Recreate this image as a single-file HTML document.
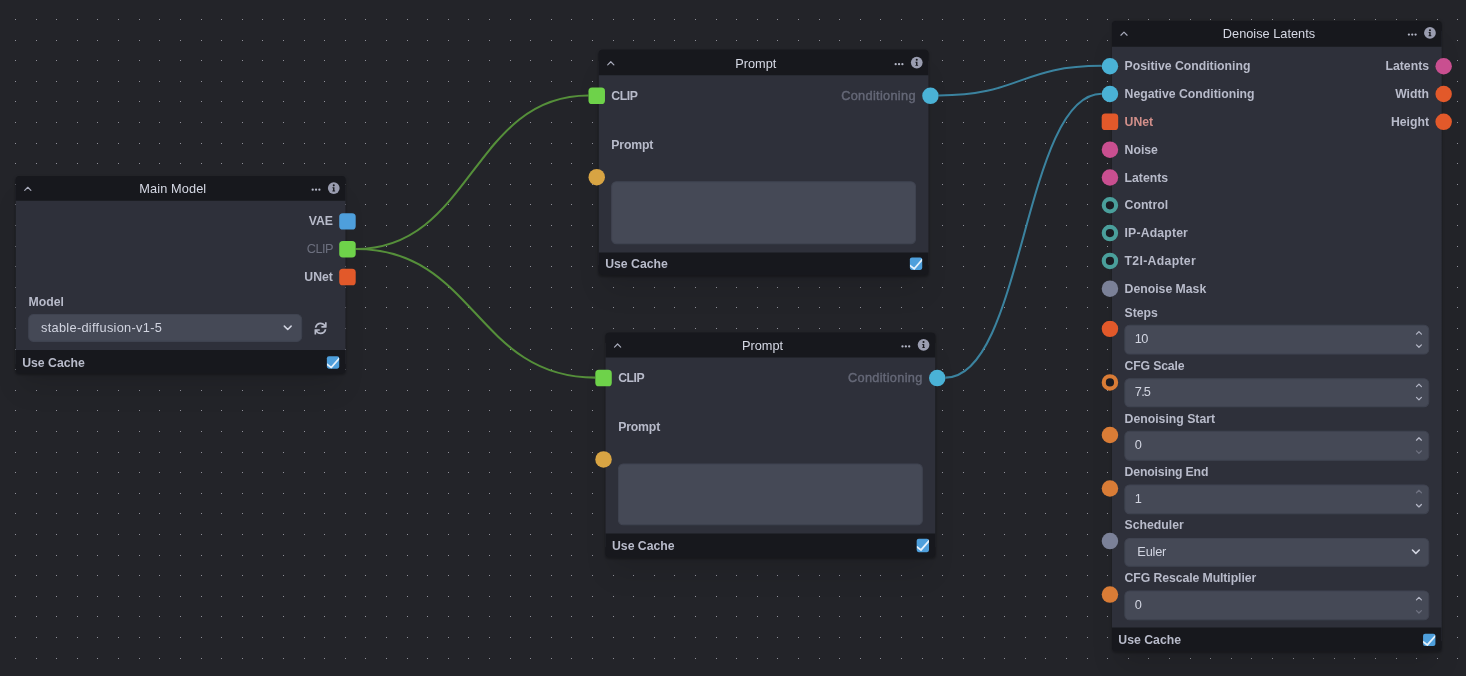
<!DOCTYPE html>
<html lang="en"><head><meta charset="utf-8"><title>Workflow Editor</title>
<style>
html,body{margin:0;padding:0}
body{width:1466px;height:676px;overflow:hidden;background:#232429;position:relative;font-family:"Liberation Sans",sans-serif}
.bg{position:absolute;left:0;top:0}
#L{position:absolute;left:0;top:0;width:1466px;height:676px;will-change:transform}
.n{position:absolute;left:0;top:0;width:320px;background:linear-gradient(to bottom,#17181d 0,#17181d 10px,#2e303a 10px,#2e303a calc(100% - 10px),#17181d calc(100% - 10px),#17181d 100%);transform-origin:0 0;border-radius:4px;box-shadow:0 20px 25px -5px rgba(0,0,0,.1),0 10px 10px -5px rgba(0,0,0,.04),0 1px 3px rgba(0,0,0,.2),0 1px 2px rgba(0,0,0,.12)}
.hd{position:absolute;left:0;top:0;width:320px;height:24px;background:#17181d;border-radius:4px 4px 0 0}
.bd{position:absolute;left:0;top:24px;width:320px;background:#2e303a}
.ft{position:absolute;left:0;width:320px;height:23.3px;background:#17181d;border-radius:0 0 4px 4px}
.t{position:absolute;white-space:nowrap;line-height:14px}
.ttl{text-align:center;font-size:12.4px;font-weight:400;color:#d6d9e5}
.i{position:absolute;display:block;overflow:visible}
.h{position:absolute;width:16px;height:16px;box-sizing:border-box}
.f{position:absolute;background:#454956;border-radius:5px;box-sizing:border-box;border:1px solid #3f4350}
.cb{position:absolute;right:5.6px;width:12.4px;height:12.2px;overflow:hidden;background:#4e9fdc;border-radius:2px}
.cb svg{display:block}
</style></head>
<body>
<div id="L">
<svg class="bg" width="1466" height="676" viewBox="0 0 1466 676" shape-rendering="crispEdges"><path fill="#8f8f98" d="M15 19h1v1h-1zm21 0h1v1h-1zm20 0h1v1h-1zm21 0h1v1h-1zm20 0h1v1h-1zm21 0h1v1h-1zm21 0h1v1h-1zm20 0h1v1h-1zm21 0h1v1h-1zm21 0h1v1h-1zm20 0h1v1h-1zm21 0h1v1h-1zm20 0h1v1h-1zm21 0h1v1h-1zm21 0h1v1h-1zm20 0h1v1h-1zm21 0h1v1h-1zm20 0h1v1h-1zm21 0h1v1h-1zm21 0h1v1h-1zm20 0h1v1h-1zm21 0h1v1h-1zm20 0h1v1h-1zm21 0h1v1h-1zm21 0h1v1h-1zm20 0h1v1h-1zm21 0h1v1h-1zm20 0h1v1h-1zm21 0h1v1h-1zm21 0h1v1h-1zm20 0h1v1h-1zm21 0h1v1h-1zm20 0h1v1h-1zm21 0h1v1h-1zm21 0h1v1h-1zm20 0h1v1h-1zm21 0h1v1h-1zm20 0h1v1h-1zm21 0h1v1h-1zm21 0h1v1h-1zm20 0h1v1h-1zm21 0h1v1h-1zm20 0h1v1h-1zm21 0h1v1h-1zm21 0h1v1h-1zm20 0h1v1h-1zm21 0h1v1h-1zm21 0h1v1h-1zm20 0h1v1h-1zm21 0h1v1h-1zm20 0h1v1h-1zm21 0h1v1h-1zm21 0h1v1h-1zm20 0h1v1h-1zm21 0h1v1h-1zm20 0h1v1h-1zm21 0h1v1h-1zm21 0h1v1h-1zm20 0h1v1h-1zm21 0h1v1h-1zm20 0h1v1h-1zm21 0h1v1h-1zm21 0h1v1h-1zm20 0h1v1h-1zm21 0h1v1h-1zm20 0h1v1h-1zm21 0h1v1h-1zm21 0h1v1h-1zm20 0h1v1h-1zm21 0h1v1h-1zm20 0h1v1h-1zM15 40h1v1h-1zm21 0h1v1h-1zm20 0h1v1h-1zm21 0h1v1h-1zm20 0h1v1h-1zm21 0h1v1h-1zm21 0h1v1h-1zm20 0h1v1h-1zm21 0h1v1h-1zm21 0h1v1h-1zm20 0h1v1h-1zm21 0h1v1h-1zm20 0h1v1h-1zm21 0h1v1h-1zm21 0h1v1h-1zm20 0h1v1h-1zm21 0h1v1h-1zm20 0h1v1h-1zm21 0h1v1h-1zm21 0h1v1h-1zm20 0h1v1h-1zm21 0h1v1h-1zm20 0h1v1h-1zm21 0h1v1h-1zm21 0h1v1h-1zm20 0h1v1h-1zm21 0h1v1h-1zm20 0h1v1h-1zm21 0h1v1h-1zm21 0h1v1h-1zm20 0h1v1h-1zm21 0h1v1h-1zm20 0h1v1h-1zm21 0h1v1h-1zm21 0h1v1h-1zm20 0h1v1h-1zm21 0h1v1h-1zm20 0h1v1h-1zm21 0h1v1h-1zm21 0h1v1h-1zm20 0h1v1h-1zm21 0h1v1h-1zm20 0h1v1h-1zm21 0h1v1h-1zm21 0h1v1h-1zm20 0h1v1h-1zm21 0h1v1h-1zm21 0h1v1h-1zm20 0h1v1h-1zm21 0h1v1h-1zm20 0h1v1h-1zm21 0h1v1h-1zm21 0h1v1h-1zm20 0h1v1h-1zm21 0h1v1h-1zm20 0h1v1h-1zm21 0h1v1h-1zm21 0h1v1h-1zm20 0h1v1h-1zm21 0h1v1h-1zm20 0h1v1h-1zm21 0h1v1h-1zm21 0h1v1h-1zm20 0h1v1h-1zm21 0h1v1h-1zm20 0h1v1h-1zm21 0h1v1h-1zm21 0h1v1h-1zm20 0h1v1h-1zm21 0h1v1h-1zm20 0h1v1h-1zM15 60h1v1h-1zm21 0h1v1h-1zm20 0h1v1h-1zm21 0h1v1h-1zm20 0h1v1h-1zm21 0h1v1h-1zm21 0h1v1h-1zm20 0h1v1h-1zm21 0h1v1h-1zm21 0h1v1h-1zm20 0h1v1h-1zm21 0h1v1h-1zm20 0h1v1h-1zm21 0h1v1h-1zm21 0h1v1h-1zm20 0h1v1h-1zm21 0h1v1h-1zm20 0h1v1h-1zm21 0h1v1h-1zm21 0h1v1h-1zm20 0h1v1h-1zm21 0h1v1h-1zm20 0h1v1h-1zm21 0h1v1h-1zm21 0h1v1h-1zm20 0h1v1h-1zm21 0h1v1h-1zm20 0h1v1h-1zm21 0h1v1h-1zm21 0h1v1h-1zm20 0h1v1h-1zm21 0h1v1h-1zm20 0h1v1h-1zm21 0h1v1h-1zm21 0h1v1h-1zm20 0h1v1h-1zm21 0h1v1h-1zm20 0h1v1h-1zm21 0h1v1h-1zm21 0h1v1h-1zm20 0h1v1h-1zm21 0h1v1h-1zm20 0h1v1h-1zm21 0h1v1h-1zm21 0h1v1h-1zm20 0h1v1h-1zm21 0h1v1h-1zm21 0h1v1h-1zm20 0h1v1h-1zm21 0h1v1h-1zm20 0h1v1h-1zm21 0h1v1h-1zm21 0h1v1h-1zm20 0h1v1h-1zm21 0h1v1h-1zm20 0h1v1h-1zm21 0h1v1h-1zm21 0h1v1h-1zm20 0h1v1h-1zm21 0h1v1h-1zm20 0h1v1h-1zm21 0h1v1h-1zm21 0h1v1h-1zm20 0h1v1h-1zm21 0h1v1h-1zm20 0h1v1h-1zm21 0h1v1h-1zm21 0h1v1h-1zm20 0h1v1h-1zm21 0h1v1h-1zm20 0h1v1h-1zM15 81h1v1h-1zm21 0h1v1h-1zm20 0h1v1h-1zm21 0h1v1h-1zm20 0h1v1h-1zm21 0h1v1h-1zm21 0h1v1h-1zm20 0h1v1h-1zm21 0h1v1h-1zm21 0h1v1h-1zm20 0h1v1h-1zm21 0h1v1h-1zm20 0h1v1h-1zm21 0h1v1h-1zm21 0h1v1h-1zm20 0h1v1h-1zm21 0h1v1h-1zm20 0h1v1h-1zm21 0h1v1h-1zm21 0h1v1h-1zm20 0h1v1h-1zm21 0h1v1h-1zm20 0h1v1h-1zm21 0h1v1h-1zm21 0h1v1h-1zm20 0h1v1h-1zm21 0h1v1h-1zm20 0h1v1h-1zm21 0h1v1h-1zm21 0h1v1h-1zm20 0h1v1h-1zm21 0h1v1h-1zm20 0h1v1h-1zm21 0h1v1h-1zm21 0h1v1h-1zm20 0h1v1h-1zm21 0h1v1h-1zm20 0h1v1h-1zm21 0h1v1h-1zm21 0h1v1h-1zm20 0h1v1h-1zm21 0h1v1h-1zm20 0h1v1h-1zm21 0h1v1h-1zm21 0h1v1h-1zm20 0h1v1h-1zm21 0h1v1h-1zm21 0h1v1h-1zm20 0h1v1h-1zm21 0h1v1h-1zm20 0h1v1h-1zm21 0h1v1h-1zm21 0h1v1h-1zm20 0h1v1h-1zm21 0h1v1h-1zm20 0h1v1h-1zm21 0h1v1h-1zm21 0h1v1h-1zm20 0h1v1h-1zm21 0h1v1h-1zm20 0h1v1h-1zm21 0h1v1h-1zm21 0h1v1h-1zm20 0h1v1h-1zm21 0h1v1h-1zm20 0h1v1h-1zm21 0h1v1h-1zm21 0h1v1h-1zm20 0h1v1h-1zm21 0h1v1h-1zm20 0h1v1h-1zM15 101h1v1h-1zm21 0h1v1h-1zm20 0h1v1h-1zm21 0h1v1h-1zm20 0h1v1h-1zm21 0h1v1h-1zm21 0h1v1h-1zm20 0h1v1h-1zm21 0h1v1h-1zm21 0h1v1h-1zm20 0h1v1h-1zm21 0h1v1h-1zm20 0h1v1h-1zm21 0h1v1h-1zm21 0h1v1h-1zm20 0h1v1h-1zm21 0h1v1h-1zm20 0h1v1h-1zm21 0h1v1h-1zm21 0h1v1h-1zm20 0h1v1h-1zm21 0h1v1h-1zm20 0h1v1h-1zm21 0h1v1h-1zm21 0h1v1h-1zm20 0h1v1h-1zm21 0h1v1h-1zm20 0h1v1h-1zm21 0h1v1h-1zm21 0h1v1h-1zm20 0h1v1h-1zm21 0h1v1h-1zm20 0h1v1h-1zm21 0h1v1h-1zm21 0h1v1h-1zm20 0h1v1h-1zm21 0h1v1h-1zm20 0h1v1h-1zm21 0h1v1h-1zm21 0h1v1h-1zm20 0h1v1h-1zm21 0h1v1h-1zm20 0h1v1h-1zm21 0h1v1h-1zm21 0h1v1h-1zm20 0h1v1h-1zm21 0h1v1h-1zm21 0h1v1h-1zm20 0h1v1h-1zm21 0h1v1h-1zm20 0h1v1h-1zm21 0h1v1h-1zm21 0h1v1h-1zm20 0h1v1h-1zm21 0h1v1h-1zm20 0h1v1h-1zm21 0h1v1h-1zm21 0h1v1h-1zm20 0h1v1h-1zm21 0h1v1h-1zm20 0h1v1h-1zm21 0h1v1h-1zm21 0h1v1h-1zm20 0h1v1h-1zm21 0h1v1h-1zm20 0h1v1h-1zm21 0h1v1h-1zm21 0h1v1h-1zm20 0h1v1h-1zm21 0h1v1h-1zm20 0h1v1h-1zM15 122h1v1h-1zm21 0h1v1h-1zm20 0h1v1h-1zm21 0h1v1h-1zm20 0h1v1h-1zm21 0h1v1h-1zm21 0h1v1h-1zm20 0h1v1h-1zm21 0h1v1h-1zm21 0h1v1h-1zm20 0h1v1h-1zm21 0h1v1h-1zm20 0h1v1h-1zm21 0h1v1h-1zm21 0h1v1h-1zm20 0h1v1h-1zm21 0h1v1h-1zm20 0h1v1h-1zm21 0h1v1h-1zm21 0h1v1h-1zm20 0h1v1h-1zm21 0h1v1h-1zm20 0h1v1h-1zm21 0h1v1h-1zm21 0h1v1h-1zm20 0h1v1h-1zm21 0h1v1h-1zm20 0h1v1h-1zm21 0h1v1h-1zm21 0h1v1h-1zm20 0h1v1h-1zm21 0h1v1h-1zm20 0h1v1h-1zm21 0h1v1h-1zm21 0h1v1h-1zm20 0h1v1h-1zm21 0h1v1h-1zm20 0h1v1h-1zm21 0h1v1h-1zm21 0h1v1h-1zm20 0h1v1h-1zm21 0h1v1h-1zm20 0h1v1h-1zm21 0h1v1h-1zm21 0h1v1h-1zm20 0h1v1h-1zm21 0h1v1h-1zm21 0h1v1h-1zm20 0h1v1h-1zm21 0h1v1h-1zm20 0h1v1h-1zm21 0h1v1h-1zm21 0h1v1h-1zm20 0h1v1h-1zm21 0h1v1h-1zm20 0h1v1h-1zm21 0h1v1h-1zm21 0h1v1h-1zm20 0h1v1h-1zm21 0h1v1h-1zm20 0h1v1h-1zm21 0h1v1h-1zm21 0h1v1h-1zm20 0h1v1h-1zm21 0h1v1h-1zm20 0h1v1h-1zm21 0h1v1h-1zm21 0h1v1h-1zm20 0h1v1h-1zm21 0h1v1h-1zm20 0h1v1h-1zM15 143h1v1h-1zm21 0h1v1h-1zm20 0h1v1h-1zm21 0h1v1h-1zm20 0h1v1h-1zm21 0h1v1h-1zm21 0h1v1h-1zm20 0h1v1h-1zm21 0h1v1h-1zm21 0h1v1h-1zm20 0h1v1h-1zm21 0h1v1h-1zm20 0h1v1h-1zm21 0h1v1h-1zm21 0h1v1h-1zm20 0h1v1h-1zm21 0h1v1h-1zm20 0h1v1h-1zm21 0h1v1h-1zm21 0h1v1h-1zm20 0h1v1h-1zm21 0h1v1h-1zm20 0h1v1h-1zm21 0h1v1h-1zm21 0h1v1h-1zm20 0h1v1h-1zm21 0h1v1h-1zm20 0h1v1h-1zm21 0h1v1h-1zm21 0h1v1h-1zm20 0h1v1h-1zm21 0h1v1h-1zm20 0h1v1h-1zm21 0h1v1h-1zm21 0h1v1h-1zm20 0h1v1h-1zm21 0h1v1h-1zm20 0h1v1h-1zm21 0h1v1h-1zm21 0h1v1h-1zm20 0h1v1h-1zm21 0h1v1h-1zm20 0h1v1h-1zm21 0h1v1h-1zm21 0h1v1h-1zm20 0h1v1h-1zm21 0h1v1h-1zm21 0h1v1h-1zm20 0h1v1h-1zm21 0h1v1h-1zm20 0h1v1h-1zm21 0h1v1h-1zm21 0h1v1h-1zm20 0h1v1h-1zm21 0h1v1h-1zm20 0h1v1h-1zm21 0h1v1h-1zm21 0h1v1h-1zm20 0h1v1h-1zm21 0h1v1h-1zm20 0h1v1h-1zm21 0h1v1h-1zm21 0h1v1h-1zm20 0h1v1h-1zm21 0h1v1h-1zm20 0h1v1h-1zm21 0h1v1h-1zm21 0h1v1h-1zm20 0h1v1h-1zm21 0h1v1h-1zm20 0h1v1h-1zM15 163h1v1h-1zm21 0h1v1h-1zm20 0h1v1h-1zm21 0h1v1h-1zm20 0h1v1h-1zm21 0h1v1h-1zm21 0h1v1h-1zm20 0h1v1h-1zm21 0h1v1h-1zm21 0h1v1h-1zm20 0h1v1h-1zm21 0h1v1h-1zm20 0h1v1h-1zm21 0h1v1h-1zm21 0h1v1h-1zm20 0h1v1h-1zm21 0h1v1h-1zm20 0h1v1h-1zm21 0h1v1h-1zm21 0h1v1h-1zm20 0h1v1h-1zm21 0h1v1h-1zm20 0h1v1h-1zm21 0h1v1h-1zm21 0h1v1h-1zm20 0h1v1h-1zm21 0h1v1h-1zm20 0h1v1h-1zm21 0h1v1h-1zm21 0h1v1h-1zm20 0h1v1h-1zm21 0h1v1h-1zm20 0h1v1h-1zm21 0h1v1h-1zm21 0h1v1h-1zm20 0h1v1h-1zm21 0h1v1h-1zm20 0h1v1h-1zm21 0h1v1h-1zm21 0h1v1h-1zm20 0h1v1h-1zm21 0h1v1h-1zm20 0h1v1h-1zm21 0h1v1h-1zm21 0h1v1h-1zm20 0h1v1h-1zm21 0h1v1h-1zm21 0h1v1h-1zm20 0h1v1h-1zm21 0h1v1h-1zm20 0h1v1h-1zm21 0h1v1h-1zm21 0h1v1h-1zm20 0h1v1h-1zm21 0h1v1h-1zm20 0h1v1h-1zm21 0h1v1h-1zm21 0h1v1h-1zm20 0h1v1h-1zm21 0h1v1h-1zm20 0h1v1h-1zm21 0h1v1h-1zm21 0h1v1h-1zm20 0h1v1h-1zm21 0h1v1h-1zm20 0h1v1h-1zm21 0h1v1h-1zm21 0h1v1h-1zm20 0h1v1h-1zm21 0h1v1h-1zm20 0h1v1h-1zM15 184h1v1h-1zm21 0h1v1h-1zm20 0h1v1h-1zm21 0h1v1h-1zm20 0h1v1h-1zm21 0h1v1h-1zm21 0h1v1h-1zm20 0h1v1h-1zm21 0h1v1h-1zm21 0h1v1h-1zm20 0h1v1h-1zm21 0h1v1h-1zm20 0h1v1h-1zm21 0h1v1h-1zm21 0h1v1h-1zm20 0h1v1h-1zm21 0h1v1h-1zm20 0h1v1h-1zm21 0h1v1h-1zm21 0h1v1h-1zm20 0h1v1h-1zm21 0h1v1h-1zm20 0h1v1h-1zm21 0h1v1h-1zm21 0h1v1h-1zm20 0h1v1h-1zm21 0h1v1h-1zm20 0h1v1h-1zm21 0h1v1h-1zm21 0h1v1h-1zm20 0h1v1h-1zm21 0h1v1h-1zm20 0h1v1h-1zm21 0h1v1h-1zm21 0h1v1h-1zm20 0h1v1h-1zm21 0h1v1h-1zm20 0h1v1h-1zm21 0h1v1h-1zm21 0h1v1h-1zm20 0h1v1h-1zm21 0h1v1h-1zm20 0h1v1h-1zm21 0h1v1h-1zm21 0h1v1h-1zm20 0h1v1h-1zm21 0h1v1h-1zm21 0h1v1h-1zm20 0h1v1h-1zm21 0h1v1h-1zm20 0h1v1h-1zm21 0h1v1h-1zm21 0h1v1h-1zm20 0h1v1h-1zm21 0h1v1h-1zm20 0h1v1h-1zm21 0h1v1h-1zm21 0h1v1h-1zm20 0h1v1h-1zm21 0h1v1h-1zm20 0h1v1h-1zm21 0h1v1h-1zm21 0h1v1h-1zm20 0h1v1h-1zm21 0h1v1h-1zm20 0h1v1h-1zm21 0h1v1h-1zm21 0h1v1h-1zm20 0h1v1h-1zm21 0h1v1h-1zm20 0h1v1h-1zM15 204h1v1h-1zm21 0h1v1h-1zm20 0h1v1h-1zm21 0h1v1h-1zm20 0h1v1h-1zm21 0h1v1h-1zm21 0h1v1h-1zm20 0h1v1h-1zm21 0h1v1h-1zm21 0h1v1h-1zm20 0h1v1h-1zm21 0h1v1h-1zm20 0h1v1h-1zm21 0h1v1h-1zm21 0h1v1h-1zm20 0h1v1h-1zm21 0h1v1h-1zm20 0h1v1h-1zm21 0h1v1h-1zm21 0h1v1h-1zm20 0h1v1h-1zm21 0h1v1h-1zm20 0h1v1h-1zm21 0h1v1h-1zm21 0h1v1h-1zm20 0h1v1h-1zm21 0h1v1h-1zm20 0h1v1h-1zm21 0h1v1h-1zm21 0h1v1h-1zm20 0h1v1h-1zm21 0h1v1h-1zm20 0h1v1h-1zm21 0h1v1h-1zm21 0h1v1h-1zm20 0h1v1h-1zm21 0h1v1h-1zm20 0h1v1h-1zm21 0h1v1h-1zm21 0h1v1h-1zm20 0h1v1h-1zm21 0h1v1h-1zm20 0h1v1h-1zm21 0h1v1h-1zm21 0h1v1h-1zm20 0h1v1h-1zm21 0h1v1h-1zm21 0h1v1h-1zm20 0h1v1h-1zm21 0h1v1h-1zm20 0h1v1h-1zm21 0h1v1h-1zm21 0h1v1h-1zm20 0h1v1h-1zm21 0h1v1h-1zm20 0h1v1h-1zm21 0h1v1h-1zm21 0h1v1h-1zm20 0h1v1h-1zm21 0h1v1h-1zm20 0h1v1h-1zm21 0h1v1h-1zm21 0h1v1h-1zm20 0h1v1h-1zm21 0h1v1h-1zm20 0h1v1h-1zm21 0h1v1h-1zm21 0h1v1h-1zm20 0h1v1h-1zm21 0h1v1h-1zm20 0h1v1h-1zM15 225h1v1h-1zm21 0h1v1h-1zm20 0h1v1h-1zm21 0h1v1h-1zm20 0h1v1h-1zm21 0h1v1h-1zm21 0h1v1h-1zm20 0h1v1h-1zm21 0h1v1h-1zm21 0h1v1h-1zm20 0h1v1h-1zm21 0h1v1h-1zm20 0h1v1h-1zm21 0h1v1h-1zm21 0h1v1h-1zm20 0h1v1h-1zm21 0h1v1h-1zm20 0h1v1h-1zm21 0h1v1h-1zm21 0h1v1h-1zm20 0h1v1h-1zm21 0h1v1h-1zm20 0h1v1h-1zm21 0h1v1h-1zm21 0h1v1h-1zm20 0h1v1h-1zm21 0h1v1h-1zm20 0h1v1h-1zm21 0h1v1h-1zm21 0h1v1h-1zm20 0h1v1h-1zm21 0h1v1h-1zm20 0h1v1h-1zm21 0h1v1h-1zm21 0h1v1h-1zm20 0h1v1h-1zm21 0h1v1h-1zm20 0h1v1h-1zm21 0h1v1h-1zm21 0h1v1h-1zm20 0h1v1h-1zm21 0h1v1h-1zm20 0h1v1h-1zm21 0h1v1h-1zm21 0h1v1h-1zm20 0h1v1h-1zm21 0h1v1h-1zm21 0h1v1h-1zm20 0h1v1h-1zm21 0h1v1h-1zm20 0h1v1h-1zm21 0h1v1h-1zm21 0h1v1h-1zm20 0h1v1h-1zm21 0h1v1h-1zm20 0h1v1h-1zm21 0h1v1h-1zm21 0h1v1h-1zm20 0h1v1h-1zm21 0h1v1h-1zm20 0h1v1h-1zm21 0h1v1h-1zm21 0h1v1h-1zm20 0h1v1h-1zm21 0h1v1h-1zm20 0h1v1h-1zm21 0h1v1h-1zm21 0h1v1h-1zm20 0h1v1h-1zm21 0h1v1h-1zm20 0h1v1h-1zM15 246h1v1h-1zm21 0h1v1h-1zm20 0h1v1h-1zm21 0h1v1h-1zm20 0h1v1h-1zm21 0h1v1h-1zm21 0h1v1h-1zm20 0h1v1h-1zm21 0h1v1h-1zm21 0h1v1h-1zm20 0h1v1h-1zm21 0h1v1h-1zm20 0h1v1h-1zm21 0h1v1h-1zm21 0h1v1h-1zm20 0h1v1h-1zm21 0h1v1h-1zm20 0h1v1h-1zm21 0h1v1h-1zm21 0h1v1h-1zm20 0h1v1h-1zm21 0h1v1h-1zm20 0h1v1h-1zm21 0h1v1h-1zm21 0h1v1h-1zm20 0h1v1h-1zm21 0h1v1h-1zm20 0h1v1h-1zm21 0h1v1h-1zm21 0h1v1h-1zm20 0h1v1h-1zm21 0h1v1h-1zm20 0h1v1h-1zm21 0h1v1h-1zm21 0h1v1h-1zm20 0h1v1h-1zm21 0h1v1h-1zm20 0h1v1h-1zm21 0h1v1h-1zm21 0h1v1h-1zm20 0h1v1h-1zm21 0h1v1h-1zm20 0h1v1h-1zm21 0h1v1h-1zm21 0h1v1h-1zm20 0h1v1h-1zm21 0h1v1h-1zm21 0h1v1h-1zm20 0h1v1h-1zm21 0h1v1h-1zm20 0h1v1h-1zm21 0h1v1h-1zm21 0h1v1h-1zm20 0h1v1h-1zm21 0h1v1h-1zm20 0h1v1h-1zm21 0h1v1h-1zm21 0h1v1h-1zm20 0h1v1h-1zm21 0h1v1h-1zm20 0h1v1h-1zm21 0h1v1h-1zm21 0h1v1h-1zm20 0h1v1h-1zm21 0h1v1h-1zm20 0h1v1h-1zm21 0h1v1h-1zm21 0h1v1h-1zm20 0h1v1h-1zm21 0h1v1h-1zm20 0h1v1h-1zM15 266h1v1h-1zm21 0h1v1h-1zm20 0h1v1h-1zm21 0h1v1h-1zm20 0h1v1h-1zm21 0h1v1h-1zm21 0h1v1h-1zm20 0h1v1h-1zm21 0h1v1h-1zm21 0h1v1h-1zm20 0h1v1h-1zm21 0h1v1h-1zm20 0h1v1h-1zm21 0h1v1h-1zm21 0h1v1h-1zm20 0h1v1h-1zm21 0h1v1h-1zm20 0h1v1h-1zm21 0h1v1h-1zm21 0h1v1h-1zm20 0h1v1h-1zm21 0h1v1h-1zm20 0h1v1h-1zm21 0h1v1h-1zm21 0h1v1h-1zm20 0h1v1h-1zm21 0h1v1h-1zm20 0h1v1h-1zm21 0h1v1h-1zm21 0h1v1h-1zm20 0h1v1h-1zm21 0h1v1h-1zm20 0h1v1h-1zm21 0h1v1h-1zm21 0h1v1h-1zm20 0h1v1h-1zm21 0h1v1h-1zm20 0h1v1h-1zm21 0h1v1h-1zm21 0h1v1h-1zm20 0h1v1h-1zm21 0h1v1h-1zm20 0h1v1h-1zm21 0h1v1h-1zm21 0h1v1h-1zm20 0h1v1h-1zm21 0h1v1h-1zm21 0h1v1h-1zm20 0h1v1h-1zm21 0h1v1h-1zm20 0h1v1h-1zm21 0h1v1h-1zm21 0h1v1h-1zm20 0h1v1h-1zm21 0h1v1h-1zm20 0h1v1h-1zm21 0h1v1h-1zm21 0h1v1h-1zm20 0h1v1h-1zm21 0h1v1h-1zm20 0h1v1h-1zm21 0h1v1h-1zm21 0h1v1h-1zm20 0h1v1h-1zm21 0h1v1h-1zm20 0h1v1h-1zm21 0h1v1h-1zm21 0h1v1h-1zm20 0h1v1h-1zm21 0h1v1h-1zm20 0h1v1h-1zM15 287h1v1h-1zm21 0h1v1h-1zm20 0h1v1h-1zm21 0h1v1h-1zm20 0h1v1h-1zm21 0h1v1h-1zm21 0h1v1h-1zm20 0h1v1h-1zm21 0h1v1h-1zm21 0h1v1h-1zm20 0h1v1h-1zm21 0h1v1h-1zm20 0h1v1h-1zm21 0h1v1h-1zm21 0h1v1h-1zm20 0h1v1h-1zm21 0h1v1h-1zm20 0h1v1h-1zm21 0h1v1h-1zm21 0h1v1h-1zm20 0h1v1h-1zm21 0h1v1h-1zm20 0h1v1h-1zm21 0h1v1h-1zm21 0h1v1h-1zm20 0h1v1h-1zm21 0h1v1h-1zm20 0h1v1h-1zm21 0h1v1h-1zm21 0h1v1h-1zm20 0h1v1h-1zm21 0h1v1h-1zm20 0h1v1h-1zm21 0h1v1h-1zm21 0h1v1h-1zm20 0h1v1h-1zm21 0h1v1h-1zm20 0h1v1h-1zm21 0h1v1h-1zm21 0h1v1h-1zm20 0h1v1h-1zm21 0h1v1h-1zm20 0h1v1h-1zm21 0h1v1h-1zm21 0h1v1h-1zm20 0h1v1h-1zm21 0h1v1h-1zm21 0h1v1h-1zm20 0h1v1h-1zm21 0h1v1h-1zm20 0h1v1h-1zm21 0h1v1h-1zm21 0h1v1h-1zm20 0h1v1h-1zm21 0h1v1h-1zm20 0h1v1h-1zm21 0h1v1h-1zm21 0h1v1h-1zm20 0h1v1h-1zm21 0h1v1h-1zm20 0h1v1h-1zm21 0h1v1h-1zm21 0h1v1h-1zm20 0h1v1h-1zm21 0h1v1h-1zm20 0h1v1h-1zm21 0h1v1h-1zm21 0h1v1h-1zm20 0h1v1h-1zm21 0h1v1h-1zm20 0h1v1h-1zM15 307h1v1h-1zm21 0h1v1h-1zm20 0h1v1h-1zm21 0h1v1h-1zm20 0h1v1h-1zm21 0h1v1h-1zm21 0h1v1h-1zm20 0h1v1h-1zm21 0h1v1h-1zm21 0h1v1h-1zm20 0h1v1h-1zm21 0h1v1h-1zm20 0h1v1h-1zm21 0h1v1h-1zm21 0h1v1h-1zm20 0h1v1h-1zm21 0h1v1h-1zm20 0h1v1h-1zm21 0h1v1h-1zm21 0h1v1h-1zm20 0h1v1h-1zm21 0h1v1h-1zm20 0h1v1h-1zm21 0h1v1h-1zm21 0h1v1h-1zm20 0h1v1h-1zm21 0h1v1h-1zm20 0h1v1h-1zm21 0h1v1h-1zm21 0h1v1h-1zm20 0h1v1h-1zm21 0h1v1h-1zm20 0h1v1h-1zm21 0h1v1h-1zm21 0h1v1h-1zm20 0h1v1h-1zm21 0h1v1h-1zm20 0h1v1h-1zm21 0h1v1h-1zm21 0h1v1h-1zm20 0h1v1h-1zm21 0h1v1h-1zm20 0h1v1h-1zm21 0h1v1h-1zm21 0h1v1h-1zm20 0h1v1h-1zm21 0h1v1h-1zm21 0h1v1h-1zm20 0h1v1h-1zm21 0h1v1h-1zm20 0h1v1h-1zm21 0h1v1h-1zm21 0h1v1h-1zm20 0h1v1h-1zm21 0h1v1h-1zm20 0h1v1h-1zm21 0h1v1h-1zm21 0h1v1h-1zm20 0h1v1h-1zm21 0h1v1h-1zm20 0h1v1h-1zm21 0h1v1h-1zm21 0h1v1h-1zm20 0h1v1h-1zm21 0h1v1h-1zm20 0h1v1h-1zm21 0h1v1h-1zm21 0h1v1h-1zm20 0h1v1h-1zm21 0h1v1h-1zm20 0h1v1h-1zM15 328h1v1h-1zm21 0h1v1h-1zm20 0h1v1h-1zm21 0h1v1h-1zm20 0h1v1h-1zm21 0h1v1h-1zm21 0h1v1h-1zm20 0h1v1h-1zm21 0h1v1h-1zm21 0h1v1h-1zm20 0h1v1h-1zm21 0h1v1h-1zm20 0h1v1h-1zm21 0h1v1h-1zm21 0h1v1h-1zm20 0h1v1h-1zm21 0h1v1h-1zm20 0h1v1h-1zm21 0h1v1h-1zm21 0h1v1h-1zm20 0h1v1h-1zm21 0h1v1h-1zm20 0h1v1h-1zm21 0h1v1h-1zm21 0h1v1h-1zm20 0h1v1h-1zm21 0h1v1h-1zm20 0h1v1h-1zm21 0h1v1h-1zm21 0h1v1h-1zm20 0h1v1h-1zm21 0h1v1h-1zm20 0h1v1h-1zm21 0h1v1h-1zm21 0h1v1h-1zm20 0h1v1h-1zm21 0h1v1h-1zm20 0h1v1h-1zm21 0h1v1h-1zm21 0h1v1h-1zm20 0h1v1h-1zm21 0h1v1h-1zm20 0h1v1h-1zm21 0h1v1h-1zm21 0h1v1h-1zm20 0h1v1h-1zm21 0h1v1h-1zm21 0h1v1h-1zm20 0h1v1h-1zm21 0h1v1h-1zm20 0h1v1h-1zm21 0h1v1h-1zm21 0h1v1h-1zm20 0h1v1h-1zm21 0h1v1h-1zm20 0h1v1h-1zm21 0h1v1h-1zm21 0h1v1h-1zm20 0h1v1h-1zm21 0h1v1h-1zm20 0h1v1h-1zm21 0h1v1h-1zm21 0h1v1h-1zm20 0h1v1h-1zm21 0h1v1h-1zm20 0h1v1h-1zm21 0h1v1h-1zm21 0h1v1h-1zm20 0h1v1h-1zm21 0h1v1h-1zm20 0h1v1h-1zM15 349h1v1h-1zm21 0h1v1h-1zm20 0h1v1h-1zm21 0h1v1h-1zm20 0h1v1h-1zm21 0h1v1h-1zm21 0h1v1h-1zm20 0h1v1h-1zm21 0h1v1h-1zm21 0h1v1h-1zm20 0h1v1h-1zm21 0h1v1h-1zm20 0h1v1h-1zm21 0h1v1h-1zm21 0h1v1h-1zm20 0h1v1h-1zm21 0h1v1h-1zm20 0h1v1h-1zm21 0h1v1h-1zm21 0h1v1h-1zm20 0h1v1h-1zm21 0h1v1h-1zm20 0h1v1h-1zm21 0h1v1h-1zm21 0h1v1h-1zm20 0h1v1h-1zm21 0h1v1h-1zm20 0h1v1h-1zm21 0h1v1h-1zm21 0h1v1h-1zm20 0h1v1h-1zm21 0h1v1h-1zm20 0h1v1h-1zm21 0h1v1h-1zm21 0h1v1h-1zm20 0h1v1h-1zm21 0h1v1h-1zm20 0h1v1h-1zm21 0h1v1h-1zm21 0h1v1h-1zm20 0h1v1h-1zm21 0h1v1h-1zm20 0h1v1h-1zm21 0h1v1h-1zm21 0h1v1h-1zm20 0h1v1h-1zm21 0h1v1h-1zm21 0h1v1h-1zm20 0h1v1h-1zm21 0h1v1h-1zm20 0h1v1h-1zm21 0h1v1h-1zm21 0h1v1h-1zm20 0h1v1h-1zm21 0h1v1h-1zm20 0h1v1h-1zm21 0h1v1h-1zm21 0h1v1h-1zm20 0h1v1h-1zm21 0h1v1h-1zm20 0h1v1h-1zm21 0h1v1h-1zm21 0h1v1h-1zm20 0h1v1h-1zm21 0h1v1h-1zm20 0h1v1h-1zm21 0h1v1h-1zm21 0h1v1h-1zm20 0h1v1h-1zm21 0h1v1h-1zm20 0h1v1h-1zM15 369h1v1h-1zm21 0h1v1h-1zm20 0h1v1h-1zm21 0h1v1h-1zm20 0h1v1h-1zm21 0h1v1h-1zm21 0h1v1h-1zm20 0h1v1h-1zm21 0h1v1h-1zm21 0h1v1h-1zm20 0h1v1h-1zm21 0h1v1h-1zm20 0h1v1h-1zm21 0h1v1h-1zm21 0h1v1h-1zm20 0h1v1h-1zm21 0h1v1h-1zm20 0h1v1h-1zm21 0h1v1h-1zm21 0h1v1h-1zm20 0h1v1h-1zm21 0h1v1h-1zm20 0h1v1h-1zm21 0h1v1h-1zm21 0h1v1h-1zm20 0h1v1h-1zm21 0h1v1h-1zm20 0h1v1h-1zm21 0h1v1h-1zm21 0h1v1h-1zm20 0h1v1h-1zm21 0h1v1h-1zm20 0h1v1h-1zm21 0h1v1h-1zm21 0h1v1h-1zm20 0h1v1h-1zm21 0h1v1h-1zm20 0h1v1h-1zm21 0h1v1h-1zm21 0h1v1h-1zm20 0h1v1h-1zm21 0h1v1h-1zm20 0h1v1h-1zm21 0h1v1h-1zm21 0h1v1h-1zm20 0h1v1h-1zm21 0h1v1h-1zm21 0h1v1h-1zm20 0h1v1h-1zm21 0h1v1h-1zm20 0h1v1h-1zm21 0h1v1h-1zm21 0h1v1h-1zm20 0h1v1h-1zm21 0h1v1h-1zm20 0h1v1h-1zm21 0h1v1h-1zm21 0h1v1h-1zm20 0h1v1h-1zm21 0h1v1h-1zm20 0h1v1h-1zm21 0h1v1h-1zm21 0h1v1h-1zm20 0h1v1h-1zm21 0h1v1h-1zm20 0h1v1h-1zm21 0h1v1h-1zm21 0h1v1h-1zm20 0h1v1h-1zm21 0h1v1h-1zm20 0h1v1h-1zM15 390h1v1h-1zm21 0h1v1h-1zm20 0h1v1h-1zm21 0h1v1h-1zm20 0h1v1h-1zm21 0h1v1h-1zm21 0h1v1h-1zm20 0h1v1h-1zm21 0h1v1h-1zm21 0h1v1h-1zm20 0h1v1h-1zm21 0h1v1h-1zm20 0h1v1h-1zm21 0h1v1h-1zm21 0h1v1h-1zm20 0h1v1h-1zm21 0h1v1h-1zm20 0h1v1h-1zm21 0h1v1h-1zm21 0h1v1h-1zm20 0h1v1h-1zm21 0h1v1h-1zm20 0h1v1h-1zm21 0h1v1h-1zm21 0h1v1h-1zm20 0h1v1h-1zm21 0h1v1h-1zm20 0h1v1h-1zm21 0h1v1h-1zm21 0h1v1h-1zm20 0h1v1h-1zm21 0h1v1h-1zm20 0h1v1h-1zm21 0h1v1h-1zm21 0h1v1h-1zm20 0h1v1h-1zm21 0h1v1h-1zm20 0h1v1h-1zm21 0h1v1h-1zm21 0h1v1h-1zm20 0h1v1h-1zm21 0h1v1h-1zm20 0h1v1h-1zm21 0h1v1h-1zm21 0h1v1h-1zm20 0h1v1h-1zm21 0h1v1h-1zm21 0h1v1h-1zm20 0h1v1h-1zm21 0h1v1h-1zm20 0h1v1h-1zm21 0h1v1h-1zm21 0h1v1h-1zm20 0h1v1h-1zm21 0h1v1h-1zm20 0h1v1h-1zm21 0h1v1h-1zm21 0h1v1h-1zm20 0h1v1h-1zm21 0h1v1h-1zm20 0h1v1h-1zm21 0h1v1h-1zm21 0h1v1h-1zm20 0h1v1h-1zm21 0h1v1h-1zm20 0h1v1h-1zm21 0h1v1h-1zm21 0h1v1h-1zm20 0h1v1h-1zm21 0h1v1h-1zm20 0h1v1h-1zM15 410h1v1h-1zm21 0h1v1h-1zm20 0h1v1h-1zm21 0h1v1h-1zm20 0h1v1h-1zm21 0h1v1h-1zm21 0h1v1h-1zm20 0h1v1h-1zm21 0h1v1h-1zm21 0h1v1h-1zm20 0h1v1h-1zm21 0h1v1h-1zm20 0h1v1h-1zm21 0h1v1h-1zm21 0h1v1h-1zm20 0h1v1h-1zm21 0h1v1h-1zm20 0h1v1h-1zm21 0h1v1h-1zm21 0h1v1h-1zm20 0h1v1h-1zm21 0h1v1h-1zm20 0h1v1h-1zm21 0h1v1h-1zm21 0h1v1h-1zm20 0h1v1h-1zm21 0h1v1h-1zm20 0h1v1h-1zm21 0h1v1h-1zm21 0h1v1h-1zm20 0h1v1h-1zm21 0h1v1h-1zm20 0h1v1h-1zm21 0h1v1h-1zm21 0h1v1h-1zm20 0h1v1h-1zm21 0h1v1h-1zm20 0h1v1h-1zm21 0h1v1h-1zm21 0h1v1h-1zm20 0h1v1h-1zm21 0h1v1h-1zm20 0h1v1h-1zm21 0h1v1h-1zm21 0h1v1h-1zm20 0h1v1h-1zm21 0h1v1h-1zm21 0h1v1h-1zm20 0h1v1h-1zm21 0h1v1h-1zm20 0h1v1h-1zm21 0h1v1h-1zm21 0h1v1h-1zm20 0h1v1h-1zm21 0h1v1h-1zm20 0h1v1h-1zm21 0h1v1h-1zm21 0h1v1h-1zm20 0h1v1h-1zm21 0h1v1h-1zm20 0h1v1h-1zm21 0h1v1h-1zm21 0h1v1h-1zm20 0h1v1h-1zm21 0h1v1h-1zm20 0h1v1h-1zm21 0h1v1h-1zm21 0h1v1h-1zm20 0h1v1h-1zm21 0h1v1h-1zm20 0h1v1h-1zM15 431h1v1h-1zm21 0h1v1h-1zm20 0h1v1h-1zm21 0h1v1h-1zm20 0h1v1h-1zm21 0h1v1h-1zm21 0h1v1h-1zm20 0h1v1h-1zm21 0h1v1h-1zm21 0h1v1h-1zm20 0h1v1h-1zm21 0h1v1h-1zm20 0h1v1h-1zm21 0h1v1h-1zm21 0h1v1h-1zm20 0h1v1h-1zm21 0h1v1h-1zm20 0h1v1h-1zm21 0h1v1h-1zm21 0h1v1h-1zm20 0h1v1h-1zm21 0h1v1h-1zm20 0h1v1h-1zm21 0h1v1h-1zm21 0h1v1h-1zm20 0h1v1h-1zm21 0h1v1h-1zm20 0h1v1h-1zm21 0h1v1h-1zm21 0h1v1h-1zm20 0h1v1h-1zm21 0h1v1h-1zm20 0h1v1h-1zm21 0h1v1h-1zm21 0h1v1h-1zm20 0h1v1h-1zm21 0h1v1h-1zm20 0h1v1h-1zm21 0h1v1h-1zm21 0h1v1h-1zm20 0h1v1h-1zm21 0h1v1h-1zm20 0h1v1h-1zm21 0h1v1h-1zm21 0h1v1h-1zm20 0h1v1h-1zm21 0h1v1h-1zm21 0h1v1h-1zm20 0h1v1h-1zm21 0h1v1h-1zm20 0h1v1h-1zm21 0h1v1h-1zm21 0h1v1h-1zm20 0h1v1h-1zm21 0h1v1h-1zm20 0h1v1h-1zm21 0h1v1h-1zm21 0h1v1h-1zm20 0h1v1h-1zm21 0h1v1h-1zm20 0h1v1h-1zm21 0h1v1h-1zm21 0h1v1h-1zm20 0h1v1h-1zm21 0h1v1h-1zm20 0h1v1h-1zm21 0h1v1h-1zm21 0h1v1h-1zm20 0h1v1h-1zm21 0h1v1h-1zm20 0h1v1h-1zM15 452h1v1h-1zm21 0h1v1h-1zm20 0h1v1h-1zm21 0h1v1h-1zm20 0h1v1h-1zm21 0h1v1h-1zm21 0h1v1h-1zm20 0h1v1h-1zm21 0h1v1h-1zm21 0h1v1h-1zm20 0h1v1h-1zm21 0h1v1h-1zm20 0h1v1h-1zm21 0h1v1h-1zm21 0h1v1h-1zm20 0h1v1h-1zm21 0h1v1h-1zm20 0h1v1h-1zm21 0h1v1h-1zm21 0h1v1h-1zm20 0h1v1h-1zm21 0h1v1h-1zm20 0h1v1h-1zm21 0h1v1h-1zm21 0h1v1h-1zm20 0h1v1h-1zm21 0h1v1h-1zm20 0h1v1h-1zm21 0h1v1h-1zm21 0h1v1h-1zm20 0h1v1h-1zm21 0h1v1h-1zm20 0h1v1h-1zm21 0h1v1h-1zm21 0h1v1h-1zm20 0h1v1h-1zm21 0h1v1h-1zm20 0h1v1h-1zm21 0h1v1h-1zm21 0h1v1h-1zm20 0h1v1h-1zm21 0h1v1h-1zm20 0h1v1h-1zm21 0h1v1h-1zm21 0h1v1h-1zm20 0h1v1h-1zm21 0h1v1h-1zm21 0h1v1h-1zm20 0h1v1h-1zm21 0h1v1h-1zm20 0h1v1h-1zm21 0h1v1h-1zm21 0h1v1h-1zm20 0h1v1h-1zm21 0h1v1h-1zm20 0h1v1h-1zm21 0h1v1h-1zm21 0h1v1h-1zm20 0h1v1h-1zm21 0h1v1h-1zm20 0h1v1h-1zm21 0h1v1h-1zm21 0h1v1h-1zm20 0h1v1h-1zm21 0h1v1h-1zm20 0h1v1h-1zm21 0h1v1h-1zm21 0h1v1h-1zm20 0h1v1h-1zm21 0h1v1h-1zm20 0h1v1h-1zM15 472h1v1h-1zm21 0h1v1h-1zm20 0h1v1h-1zm21 0h1v1h-1zm20 0h1v1h-1zm21 0h1v1h-1zm21 0h1v1h-1zm20 0h1v1h-1zm21 0h1v1h-1zm21 0h1v1h-1zm20 0h1v1h-1zm21 0h1v1h-1zm20 0h1v1h-1zm21 0h1v1h-1zm21 0h1v1h-1zm20 0h1v1h-1zm21 0h1v1h-1zm20 0h1v1h-1zm21 0h1v1h-1zm21 0h1v1h-1zm20 0h1v1h-1zm21 0h1v1h-1zm20 0h1v1h-1zm21 0h1v1h-1zm21 0h1v1h-1zm20 0h1v1h-1zm21 0h1v1h-1zm20 0h1v1h-1zm21 0h1v1h-1zm21 0h1v1h-1zm20 0h1v1h-1zm21 0h1v1h-1zm20 0h1v1h-1zm21 0h1v1h-1zm21 0h1v1h-1zm20 0h1v1h-1zm21 0h1v1h-1zm20 0h1v1h-1zm21 0h1v1h-1zm21 0h1v1h-1zm20 0h1v1h-1zm21 0h1v1h-1zm20 0h1v1h-1zm21 0h1v1h-1zm21 0h1v1h-1zm20 0h1v1h-1zm21 0h1v1h-1zm21 0h1v1h-1zm20 0h1v1h-1zm21 0h1v1h-1zm20 0h1v1h-1zm21 0h1v1h-1zm21 0h1v1h-1zm20 0h1v1h-1zm21 0h1v1h-1zm20 0h1v1h-1zm21 0h1v1h-1zm21 0h1v1h-1zm20 0h1v1h-1zm21 0h1v1h-1zm20 0h1v1h-1zm21 0h1v1h-1zm21 0h1v1h-1zm20 0h1v1h-1zm21 0h1v1h-1zm20 0h1v1h-1zm21 0h1v1h-1zm21 0h1v1h-1zm20 0h1v1h-1zm21 0h1v1h-1zm20 0h1v1h-1zM15 493h1v1h-1zm21 0h1v1h-1zm20 0h1v1h-1zm21 0h1v1h-1zm20 0h1v1h-1zm21 0h1v1h-1zm21 0h1v1h-1zm20 0h1v1h-1zm21 0h1v1h-1zm21 0h1v1h-1zm20 0h1v1h-1zm21 0h1v1h-1zm20 0h1v1h-1zm21 0h1v1h-1zm21 0h1v1h-1zm20 0h1v1h-1zm21 0h1v1h-1zm20 0h1v1h-1zm21 0h1v1h-1zm21 0h1v1h-1zm20 0h1v1h-1zm21 0h1v1h-1zm20 0h1v1h-1zm21 0h1v1h-1zm21 0h1v1h-1zm20 0h1v1h-1zm21 0h1v1h-1zm20 0h1v1h-1zm21 0h1v1h-1zm21 0h1v1h-1zm20 0h1v1h-1zm21 0h1v1h-1zm20 0h1v1h-1zm21 0h1v1h-1zm21 0h1v1h-1zm20 0h1v1h-1zm21 0h1v1h-1zm20 0h1v1h-1zm21 0h1v1h-1zm21 0h1v1h-1zm20 0h1v1h-1zm21 0h1v1h-1zm20 0h1v1h-1zm21 0h1v1h-1zm21 0h1v1h-1zm20 0h1v1h-1zm21 0h1v1h-1zm21 0h1v1h-1zm20 0h1v1h-1zm21 0h1v1h-1zm20 0h1v1h-1zm21 0h1v1h-1zm21 0h1v1h-1zm20 0h1v1h-1zm21 0h1v1h-1zm20 0h1v1h-1zm21 0h1v1h-1zm21 0h1v1h-1zm20 0h1v1h-1zm21 0h1v1h-1zm20 0h1v1h-1zm21 0h1v1h-1zm21 0h1v1h-1zm20 0h1v1h-1zm21 0h1v1h-1zm20 0h1v1h-1zm21 0h1v1h-1zm21 0h1v1h-1zm20 0h1v1h-1zm21 0h1v1h-1zm20 0h1v1h-1zM15 513h1v1h-1zm21 0h1v1h-1zm20 0h1v1h-1zm21 0h1v1h-1zm20 0h1v1h-1zm21 0h1v1h-1zm21 0h1v1h-1zm20 0h1v1h-1zm21 0h1v1h-1zm21 0h1v1h-1zm20 0h1v1h-1zm21 0h1v1h-1zm20 0h1v1h-1zm21 0h1v1h-1zm21 0h1v1h-1zm20 0h1v1h-1zm21 0h1v1h-1zm20 0h1v1h-1zm21 0h1v1h-1zm21 0h1v1h-1zm20 0h1v1h-1zm21 0h1v1h-1zm20 0h1v1h-1zm21 0h1v1h-1zm21 0h1v1h-1zm20 0h1v1h-1zm21 0h1v1h-1zm20 0h1v1h-1zm21 0h1v1h-1zm21 0h1v1h-1zm20 0h1v1h-1zm21 0h1v1h-1zm20 0h1v1h-1zm21 0h1v1h-1zm21 0h1v1h-1zm20 0h1v1h-1zm21 0h1v1h-1zm20 0h1v1h-1zm21 0h1v1h-1zm21 0h1v1h-1zm20 0h1v1h-1zm21 0h1v1h-1zm20 0h1v1h-1zm21 0h1v1h-1zm21 0h1v1h-1zm20 0h1v1h-1zm21 0h1v1h-1zm21 0h1v1h-1zm20 0h1v1h-1zm21 0h1v1h-1zm20 0h1v1h-1zm21 0h1v1h-1zm21 0h1v1h-1zm20 0h1v1h-1zm21 0h1v1h-1zm20 0h1v1h-1zm21 0h1v1h-1zm21 0h1v1h-1zm20 0h1v1h-1zm21 0h1v1h-1zm20 0h1v1h-1zm21 0h1v1h-1zm21 0h1v1h-1zm20 0h1v1h-1zm21 0h1v1h-1zm20 0h1v1h-1zm21 0h1v1h-1zm21 0h1v1h-1zm20 0h1v1h-1zm21 0h1v1h-1zm20 0h1v1h-1zM15 534h1v1h-1zm21 0h1v1h-1zm20 0h1v1h-1zm21 0h1v1h-1zm20 0h1v1h-1zm21 0h1v1h-1zm21 0h1v1h-1zm20 0h1v1h-1zm21 0h1v1h-1zm21 0h1v1h-1zm20 0h1v1h-1zm21 0h1v1h-1zm20 0h1v1h-1zm21 0h1v1h-1zm21 0h1v1h-1zm20 0h1v1h-1zm21 0h1v1h-1zm20 0h1v1h-1zm21 0h1v1h-1zm21 0h1v1h-1zm20 0h1v1h-1zm21 0h1v1h-1zm20 0h1v1h-1zm21 0h1v1h-1zm21 0h1v1h-1zm20 0h1v1h-1zm21 0h1v1h-1zm20 0h1v1h-1zm21 0h1v1h-1zm21 0h1v1h-1zm20 0h1v1h-1zm21 0h1v1h-1zm20 0h1v1h-1zm21 0h1v1h-1zm21 0h1v1h-1zm20 0h1v1h-1zm21 0h1v1h-1zm20 0h1v1h-1zm21 0h1v1h-1zm21 0h1v1h-1zm20 0h1v1h-1zm21 0h1v1h-1zm20 0h1v1h-1zm21 0h1v1h-1zm21 0h1v1h-1zm20 0h1v1h-1zm21 0h1v1h-1zm21 0h1v1h-1zm20 0h1v1h-1zm21 0h1v1h-1zm20 0h1v1h-1zm21 0h1v1h-1zm21 0h1v1h-1zm20 0h1v1h-1zm21 0h1v1h-1zm20 0h1v1h-1zm21 0h1v1h-1zm21 0h1v1h-1zm20 0h1v1h-1zm21 0h1v1h-1zm20 0h1v1h-1zm21 0h1v1h-1zm21 0h1v1h-1zm20 0h1v1h-1zm21 0h1v1h-1zm20 0h1v1h-1zm21 0h1v1h-1zm21 0h1v1h-1zm20 0h1v1h-1zm21 0h1v1h-1zm20 0h1v1h-1zM15 555h1v1h-1zm21 0h1v1h-1zm20 0h1v1h-1zm21 0h1v1h-1zm20 0h1v1h-1zm21 0h1v1h-1zm21 0h1v1h-1zm20 0h1v1h-1zm21 0h1v1h-1zm21 0h1v1h-1zm20 0h1v1h-1zm21 0h1v1h-1zm20 0h1v1h-1zm21 0h1v1h-1zm21 0h1v1h-1zm20 0h1v1h-1zm21 0h1v1h-1zm20 0h1v1h-1zm21 0h1v1h-1zm21 0h1v1h-1zm20 0h1v1h-1zm21 0h1v1h-1zm20 0h1v1h-1zm21 0h1v1h-1zm21 0h1v1h-1zm20 0h1v1h-1zm21 0h1v1h-1zm20 0h1v1h-1zm21 0h1v1h-1zm21 0h1v1h-1zm20 0h1v1h-1zm21 0h1v1h-1zm20 0h1v1h-1zm21 0h1v1h-1zm21 0h1v1h-1zm20 0h1v1h-1zm21 0h1v1h-1zm20 0h1v1h-1zm21 0h1v1h-1zm21 0h1v1h-1zm20 0h1v1h-1zm21 0h1v1h-1zm20 0h1v1h-1zm21 0h1v1h-1zm21 0h1v1h-1zm20 0h1v1h-1zm21 0h1v1h-1zm21 0h1v1h-1zm20 0h1v1h-1zm21 0h1v1h-1zm20 0h1v1h-1zm21 0h1v1h-1zm21 0h1v1h-1zm20 0h1v1h-1zm21 0h1v1h-1zm20 0h1v1h-1zm21 0h1v1h-1zm21 0h1v1h-1zm20 0h1v1h-1zm21 0h1v1h-1zm20 0h1v1h-1zm21 0h1v1h-1zm21 0h1v1h-1zm20 0h1v1h-1zm21 0h1v1h-1zm20 0h1v1h-1zm21 0h1v1h-1zm21 0h1v1h-1zm20 0h1v1h-1zm21 0h1v1h-1zm20 0h1v1h-1zM15 575h1v1h-1zm21 0h1v1h-1zm20 0h1v1h-1zm21 0h1v1h-1zm20 0h1v1h-1zm21 0h1v1h-1zm21 0h1v1h-1zm20 0h1v1h-1zm21 0h1v1h-1zm21 0h1v1h-1zm20 0h1v1h-1zm21 0h1v1h-1zm20 0h1v1h-1zm21 0h1v1h-1zm21 0h1v1h-1zm20 0h1v1h-1zm21 0h1v1h-1zm20 0h1v1h-1zm21 0h1v1h-1zm21 0h1v1h-1zm20 0h1v1h-1zm21 0h1v1h-1zm20 0h1v1h-1zm21 0h1v1h-1zm21 0h1v1h-1zm20 0h1v1h-1zm21 0h1v1h-1zm20 0h1v1h-1zm21 0h1v1h-1zm21 0h1v1h-1zm20 0h1v1h-1zm21 0h1v1h-1zm20 0h1v1h-1zm21 0h1v1h-1zm21 0h1v1h-1zm20 0h1v1h-1zm21 0h1v1h-1zm20 0h1v1h-1zm21 0h1v1h-1zm21 0h1v1h-1zm20 0h1v1h-1zm21 0h1v1h-1zm20 0h1v1h-1zm21 0h1v1h-1zm21 0h1v1h-1zm20 0h1v1h-1zm21 0h1v1h-1zm21 0h1v1h-1zm20 0h1v1h-1zm21 0h1v1h-1zm20 0h1v1h-1zm21 0h1v1h-1zm21 0h1v1h-1zm20 0h1v1h-1zm21 0h1v1h-1zm20 0h1v1h-1zm21 0h1v1h-1zm21 0h1v1h-1zm20 0h1v1h-1zm21 0h1v1h-1zm20 0h1v1h-1zm21 0h1v1h-1zm21 0h1v1h-1zm20 0h1v1h-1zm21 0h1v1h-1zm20 0h1v1h-1zm21 0h1v1h-1zm21 0h1v1h-1zm20 0h1v1h-1zm21 0h1v1h-1zm20 0h1v1h-1zM15 596h1v1h-1zm21 0h1v1h-1zm20 0h1v1h-1zm21 0h1v1h-1zm20 0h1v1h-1zm21 0h1v1h-1zm21 0h1v1h-1zm20 0h1v1h-1zm21 0h1v1h-1zm21 0h1v1h-1zm20 0h1v1h-1zm21 0h1v1h-1zm20 0h1v1h-1zm21 0h1v1h-1zm21 0h1v1h-1zm20 0h1v1h-1zm21 0h1v1h-1zm20 0h1v1h-1zm21 0h1v1h-1zm21 0h1v1h-1zm20 0h1v1h-1zm21 0h1v1h-1zm20 0h1v1h-1zm21 0h1v1h-1zm21 0h1v1h-1zm20 0h1v1h-1zm21 0h1v1h-1zm20 0h1v1h-1zm21 0h1v1h-1zm21 0h1v1h-1zm20 0h1v1h-1zm21 0h1v1h-1zm20 0h1v1h-1zm21 0h1v1h-1zm21 0h1v1h-1zm20 0h1v1h-1zm21 0h1v1h-1zm20 0h1v1h-1zm21 0h1v1h-1zm21 0h1v1h-1zm20 0h1v1h-1zm21 0h1v1h-1zm20 0h1v1h-1zm21 0h1v1h-1zm21 0h1v1h-1zm20 0h1v1h-1zm21 0h1v1h-1zm21 0h1v1h-1zm20 0h1v1h-1zm21 0h1v1h-1zm20 0h1v1h-1zm21 0h1v1h-1zm21 0h1v1h-1zm20 0h1v1h-1zm21 0h1v1h-1zm20 0h1v1h-1zm21 0h1v1h-1zm21 0h1v1h-1zm20 0h1v1h-1zm21 0h1v1h-1zm20 0h1v1h-1zm21 0h1v1h-1zm21 0h1v1h-1zm20 0h1v1h-1zm21 0h1v1h-1zm20 0h1v1h-1zm21 0h1v1h-1zm21 0h1v1h-1zm20 0h1v1h-1zm21 0h1v1h-1zm20 0h1v1h-1zM15 616h1v1h-1zm21 0h1v1h-1zm20 0h1v1h-1zm21 0h1v1h-1zm20 0h1v1h-1zm21 0h1v1h-1zm21 0h1v1h-1zm20 0h1v1h-1zm21 0h1v1h-1zm21 0h1v1h-1zm20 0h1v1h-1zm21 0h1v1h-1zm20 0h1v1h-1zm21 0h1v1h-1zm21 0h1v1h-1zm20 0h1v1h-1zm21 0h1v1h-1zm20 0h1v1h-1zm21 0h1v1h-1zm21 0h1v1h-1zm20 0h1v1h-1zm21 0h1v1h-1zm20 0h1v1h-1zm21 0h1v1h-1zm21 0h1v1h-1zm20 0h1v1h-1zm21 0h1v1h-1zm20 0h1v1h-1zm21 0h1v1h-1zm21 0h1v1h-1zm20 0h1v1h-1zm21 0h1v1h-1zm20 0h1v1h-1zm21 0h1v1h-1zm21 0h1v1h-1zm20 0h1v1h-1zm21 0h1v1h-1zm20 0h1v1h-1zm21 0h1v1h-1zm21 0h1v1h-1zm20 0h1v1h-1zm21 0h1v1h-1zm20 0h1v1h-1zm21 0h1v1h-1zm21 0h1v1h-1zm20 0h1v1h-1zm21 0h1v1h-1zm21 0h1v1h-1zm20 0h1v1h-1zm21 0h1v1h-1zm20 0h1v1h-1zm21 0h1v1h-1zm21 0h1v1h-1zm20 0h1v1h-1zm21 0h1v1h-1zm20 0h1v1h-1zm21 0h1v1h-1zm21 0h1v1h-1zm20 0h1v1h-1zm21 0h1v1h-1zm20 0h1v1h-1zm21 0h1v1h-1zm21 0h1v1h-1zm20 0h1v1h-1zm21 0h1v1h-1zm20 0h1v1h-1zm21 0h1v1h-1zm21 0h1v1h-1zm20 0h1v1h-1zm21 0h1v1h-1zm20 0h1v1h-1zM15 637h1v1h-1zm21 0h1v1h-1zm20 0h1v1h-1zm21 0h1v1h-1zm20 0h1v1h-1zm21 0h1v1h-1zm21 0h1v1h-1zm20 0h1v1h-1zm21 0h1v1h-1zm21 0h1v1h-1zm20 0h1v1h-1zm21 0h1v1h-1zm20 0h1v1h-1zm21 0h1v1h-1zm21 0h1v1h-1zm20 0h1v1h-1zm21 0h1v1h-1zm20 0h1v1h-1zm21 0h1v1h-1zm21 0h1v1h-1zm20 0h1v1h-1zm21 0h1v1h-1zm20 0h1v1h-1zm21 0h1v1h-1zm21 0h1v1h-1zm20 0h1v1h-1zm21 0h1v1h-1zm20 0h1v1h-1zm21 0h1v1h-1zm21 0h1v1h-1zm20 0h1v1h-1zm21 0h1v1h-1zm20 0h1v1h-1zm21 0h1v1h-1zm21 0h1v1h-1zm20 0h1v1h-1zm21 0h1v1h-1zm20 0h1v1h-1zm21 0h1v1h-1zm21 0h1v1h-1zm20 0h1v1h-1zm21 0h1v1h-1zm20 0h1v1h-1zm21 0h1v1h-1zm21 0h1v1h-1zm20 0h1v1h-1zm21 0h1v1h-1zm21 0h1v1h-1zm20 0h1v1h-1zm21 0h1v1h-1zm20 0h1v1h-1zm21 0h1v1h-1zm21 0h1v1h-1zm20 0h1v1h-1zm21 0h1v1h-1zm20 0h1v1h-1zm21 0h1v1h-1zm21 0h1v1h-1zm20 0h1v1h-1zm21 0h1v1h-1zm20 0h1v1h-1zm21 0h1v1h-1zm21 0h1v1h-1zm20 0h1v1h-1zm21 0h1v1h-1zm20 0h1v1h-1zm21 0h1v1h-1zm21 0h1v1h-1zm20 0h1v1h-1zm21 0h1v1h-1zm20 0h1v1h-1zM15 658h1v1h-1zm21 0h1v1h-1zm20 0h1v1h-1zm21 0h1v1h-1zm20 0h1v1h-1zm21 0h1v1h-1zm21 0h1v1h-1zm20 0h1v1h-1zm21 0h1v1h-1zm21 0h1v1h-1zm20 0h1v1h-1zm21 0h1v1h-1zm20 0h1v1h-1zm21 0h1v1h-1zm21 0h1v1h-1zm20 0h1v1h-1zm21 0h1v1h-1zm20 0h1v1h-1zm21 0h1v1h-1zm21 0h1v1h-1zm20 0h1v1h-1zm21 0h1v1h-1zm20 0h1v1h-1zm21 0h1v1h-1zm21 0h1v1h-1zm20 0h1v1h-1zm21 0h1v1h-1zm20 0h1v1h-1zm21 0h1v1h-1zm21 0h1v1h-1zm20 0h1v1h-1zm21 0h1v1h-1zm20 0h1v1h-1zm21 0h1v1h-1zm21 0h1v1h-1zm20 0h1v1h-1zm21 0h1v1h-1zm20 0h1v1h-1zm21 0h1v1h-1zm21 0h1v1h-1zm20 0h1v1h-1zm21 0h1v1h-1zm20 0h1v1h-1zm21 0h1v1h-1zm21 0h1v1h-1zm20 0h1v1h-1zm21 0h1v1h-1zm21 0h1v1h-1zm20 0h1v1h-1zm21 0h1v1h-1zm20 0h1v1h-1zm21 0h1v1h-1zm21 0h1v1h-1zm20 0h1v1h-1zm21 0h1v1h-1zm20 0h1v1h-1zm21 0h1v1h-1zm21 0h1v1h-1zm20 0h1v1h-1zm21 0h1v1h-1zm20 0h1v1h-1zm21 0h1v1h-1zm21 0h1v1h-1zm20 0h1v1h-1zm21 0h1v1h-1zm20 0h1v1h-1zm21 0h1v1h-1zm21 0h1v1h-1zm20 0h1v1h-1zm21 0h1v1h-1zm20 0h1v1h-1z"/></svg>
<svg class="bg" width="1466" height="676" viewBox="0 0 1466 676"><path d="M355.8 249.0 C472.1 249.0 472.1 95.45 588.4 95.45" fill="none" stroke="#558f3a" stroke-width="2.06"/><path d="M355.8 249.0 C475.5 249.0 475.5 377.6 595.2 377.6" fill="none" stroke="#558f3a" stroke-width="2.06"/><path d="M938.8 95.45 C1020.25 95.45 1020.25 65.8 1101.7 65.8" fill="none" stroke="#3b839f" stroke-width="2.06"/><path d="M945.6 377.6 C1023.6500000000001 377.6 1023.6500000000001 93.7 1101.7 93.7" fill="none" stroke="#3b839f" stroke-width="2.06"/></svg>
<div class="n" style="transform:translate(15.8px,176.05px) scale(1.03);height:192.16px"><div class="hd" style="top:0px;height:24.3px"></div><svg class="i" style="left:8.25px;top:9.8px" width="7.3" height="4.56" viewBox="0 0 8 5"><path d="M0.7 4.3 L4 1 L7.3 4.3" fill="none" stroke="#a9acbc" stroke-width="1.25" stroke-linecap="round" stroke-linejoin="round"/></svg><div class="t ttl" style="left:0;width:304.8px;top:5px;letter-spacing:0.1px">Main Model</div><svg class="i" style="left:287.00px;top:11.80px" width="9.0" height="2.5" viewBox="0 0 9.4 2.6"><circle cx="1.3" cy="1.3" r="1.15" fill="#b4b7c6"/><circle cx="4.7" cy="1.3" r="1.15" fill="#b4b7c6"/><circle cx="8.1" cy="1.3" r="1.15" fill="#b4b7c6"/></svg><svg class="i" style="left:302.80px;top:6.20px" width="11.4" height="11.4" viewBox="0 0 12 12"><circle cx="6" cy="6" r="6" fill="#9a9db0"/><circle cx="6" cy="3.2" r="1.05" fill="#17181d"/><path d="M4.7 5.1h2v3.3h.7v1H4.6v-1h.7V6.1h-.6z" fill="#17181d"/></svg><div class="h" style="left:314.35px;top:35.80px;background:#4e9fdc;border-radius:3.5px;"></div><div class="t" style="right:12.1px;top:37.00px;font-size:11.9px;font-weight:700;color:#b8bbca">VAE</div><div class="h" style="left:314.35px;top:62.90px;background:#6ed24a;border-radius:3.5px;"></div><div class="t" style="right:12.1px;top:64.00px;font-size:12.4px;font-weight:400;color:#6c6f7e;letter-spacing:-0.55px">CLIP</div><div class="h" style="left:314.35px;top:90.00px;background:#e2592a;border-radius:3.5px;"></div><div class="t" style="right:12.1px;top:91.00px;font-size:11.9px;font-weight:700;color:#b8bbca">UNet</div><div class="t" style="left:12.3px;top:115.00px;font-size:11.9px;font-weight:700;color:#b8bbca">Model</div><div class="f" style="left:12.2px;top:133.95px;width:265.8px;height:27.3px"></div><div class="t" style="left:24.45px;top:140.00px;font-size:12.4px;font-weight:400;color:#d2d5e1;letter-spacing:0.3px">stable-diffusion-v1-5</div><svg class="i" style="left:260.1px;top:144.55px" width="8" height="5" viewBox="0 0 8 5"><path d="M0.7 0.7 L4 4 L7.3 0.7" fill="none" stroke="#d2d5e1" stroke-width="1.5" stroke-linecap="round" stroke-linejoin="round"/></svg><svg class="i" style="left:290.20px;top:142.05px" width="11.8" height="11.8" viewBox="0 0 512 512"><path fill="#b8bbca" d="M440.65 12.57l4 82.77A247.16 247.16 0 0 0 255.83 8C134.73 8 33.91 94.92 12.29 209.82A12 12 0 0 0 24.09 224h49.05a12 12 0 0 0 11.67-9.26 175.91 175.91 0 0 1 317-56.94l-101.46-4.86a12 12 0 0 0-12.57 12v47.41a12 12 0 0 0 12 12H500a12 12 0 0 0 12-12V12a12 12 0 0 0-12-12h-47.37a12 12 0 0 0-11.98 12.57zM255.83 432a175.61 175.61 0 0 1-146-77.8l101.8 4.87a12 12 0 0 0 12.57-12v-47.4a12 12 0 0 0-12-12H12a12 12 0 0 0-12 12V500a12 12 0 0 0 12 12h47.35a12 12 0 0 0 12-12.6l-4.15-82.57A247.17 247.17 0 0 0 255.83 504c121.11 0 221.93-86.92 243.55-201.82a12 12 0 0 0-11.8-14.18h-49.05a12 12 0 0 0-11.67 9.26A175.86 175.86 0 0 1 255.83 432z"/></svg><div class="ft" style="top:168.56px;height:23.6px"><div class="cb" style="top:6.4px"><svg width="12.4" height="12.2" viewBox="0 0 12.4 12.2"><path d="M-0.3 7.4 L4.2 10.9 L12.7 1.2" fill="none" stroke="#e4f0fb" stroke-width="1.75" stroke-linecap="butt" stroke-linejoin="miter"/></svg></div></div><div class="t" style="left:6.2px;top:174.00px;font-size:11.9px;font-weight:700;color:#b8bbca">Use Cache</div></div>
<div class="n" style="transform:translate(598.8px,50.5px) scale(1.03);height:218.2px"><div class="hd" style="top:-0.6px;height:24.6px"></div><svg class="i" style="left:8.25px;top:9.8px" width="7.3" height="4.56" viewBox="0 0 8 5"><path d="M0.7 4.3 L4 1 L7.3 4.3" fill="none" stroke="#a9acbc" stroke-width="1.25" stroke-linecap="round" stroke-linejoin="round"/></svg><div class="t ttl" style="left:0;width:304.8px;top:6px;letter-spacing:0px">Prompt</div><svg class="i" style="left:287.00px;top:11.80px" width="9.0" height="2.5" viewBox="0 0 9.4 2.6"><circle cx="1.3" cy="1.3" r="1.15" fill="#b4b7c6"/><circle cx="4.7" cy="1.3" r="1.15" fill="#b4b7c6"/><circle cx="8.1" cy="1.3" r="1.15" fill="#b4b7c6"/></svg><svg class="i" style="left:302.80px;top:6.20px" width="11.4" height="11.4" viewBox="0 0 12 12"><circle cx="6" cy="6" r="6" fill="#9a9db0"/><circle cx="6" cy="3.2" r="1.05" fill="#17181d"/><path d="M4.7 5.1h2v3.3h.7v1H4.6v-1h.7V6.1h-.6z" fill="#17181d"/></svg><div class="h" style="left:-10.35px;top:35.50px;background:#6ed24a;border-radius:3.5px;"></div><div class="t" style="left:12.2px;top:37.00px;font-size:11.9px;font-weight:700;color:#b8bbca;letter-spacing:-0.45px">CLIP</div><div class="h" style="left:314.35px;top:35.50px;background:#4ab2d6;border-radius:50%;"></div><div class="t" style="right:12.2px;top:37.00px;font-size:12.4px;font-weight:400;color:#656877;letter-spacing:0.3px;-webkit-text-stroke:0.4px #656877">Conditioning</div><div class="t" style="left:12.2px;top:85.00px;font-size:11.9px;font-weight:700;color:#b8bbca;letter-spacing:-0.15px">Prompt</div><div class="h" style="left:-10.35px;top:115.30px;background:#d8a443;border-radius:50%;"></div><div class="f" style="left:11.55px;top:127.3px;width:296.4px;height:60.3px"></div><div class="ft" style="top:195.5px;height:22.7px"><div class="cb" style="top:5.7px"><svg width="12.4" height="12.2" viewBox="0 0 12.4 12.2"><path d="M-0.3 7.4 L4.2 10.9 L12.7 1.2" fill="none" stroke="#e4f0fb" stroke-width="1.75" stroke-linecap="butt" stroke-linejoin="miter"/></svg></div></div><div class="t" style="left:6.2px;top:200.00px;font-size:11.9px;font-weight:700;color:#b8bbca">Use Cache</div></div>
<div class="n" style="transform:translate(605.6px,332.75px) scale(1.03);height:217.6px"><div class="hd" style="top:0px;height:24.3px"></div><svg class="i" style="left:8.25px;top:9.8px" width="7.3" height="4.56" viewBox="0 0 8 5"><path d="M0.7 4.3 L4 1 L7.3 4.3" fill="none" stroke="#a9acbc" stroke-width="1.25" stroke-linecap="round" stroke-linejoin="round"/></svg><div class="t ttl" style="left:0;width:304.8px;top:6px;letter-spacing:0px">Prompt</div><svg class="i" style="left:287.00px;top:11.80px" width="9.0" height="2.5" viewBox="0 0 9.4 2.6"><circle cx="1.3" cy="1.3" r="1.15" fill="#b4b7c6"/><circle cx="4.7" cy="1.3" r="1.15" fill="#b4b7c6"/><circle cx="8.1" cy="1.3" r="1.15" fill="#b4b7c6"/></svg><svg class="i" style="left:302.80px;top:6.20px" width="11.4" height="11.4" viewBox="0 0 12 12"><circle cx="6" cy="6" r="6" fill="#9a9db0"/><circle cx="6" cy="3.2" r="1.05" fill="#17181d"/><path d="M4.7 5.1h2v3.3h.7v1H4.6v-1h.7V6.1h-.6z" fill="#17181d"/></svg><div class="h" style="left:-10.35px;top:35.50px;background:#6ed24a;border-radius:3.5px;"></div><div class="t" style="left:12.2px;top:37.00px;font-size:11.9px;font-weight:700;color:#b8bbca;letter-spacing:-0.45px">CLIP</div><div class="h" style="left:314.35px;top:35.50px;background:#4ab2d6;border-radius:50%;"></div><div class="t" style="right:12.2px;top:37.00px;font-size:12.4px;font-weight:400;color:#656877;letter-spacing:0.3px;-webkit-text-stroke:0.4px #656877">Conditioning</div><div class="t" style="left:12.2px;top:84.00px;font-size:11.9px;font-weight:700;color:#b8bbca;letter-spacing:-0.15px">Prompt</div><div class="h" style="left:-10.35px;top:115.30px;background:#d8a443;border-radius:50%;"></div><div class="f" style="left:11.55px;top:126.6px;width:296.4px;height:60.45px"></div><div class="ft" style="top:194.5px;height:23.1px"><div class="cb" style="top:5.9px"><svg width="12.4" height="12.2" viewBox="0 0 12.4 12.2"><path d="M-0.3 7.4 L4.2 10.9 L12.7 1.2" fill="none" stroke="#e4f0fb" stroke-width="1.75" stroke-linecap="butt" stroke-linejoin="miter"/></svg></div></div><div class="t" style="left:6.2px;top:200.00px;font-size:11.9px;font-weight:700;color:#b8bbca">Use Cache</div></div>
<div class="n" style="transform:translate(1112.0px,20.9px) scale(1.03);height:611.9px"><div class="hd" style="top:0px;height:24.85px"></div><svg class="i" style="left:8.25px;top:9.8px" width="7.3" height="4.56" viewBox="0 0 8 5"><path d="M0.7 4.3 L4 1 L7.3 4.3" fill="none" stroke="#a9acbc" stroke-width="1.25" stroke-linecap="round" stroke-linejoin="round"/></svg><div class="t ttl" style="left:0;width:304.8px;top:6px;letter-spacing:0px">Denoise Latents</div><svg class="i" style="left:287.00px;top:11.80px" width="9.0" height="2.5" viewBox="0 0 9.4 2.6"><circle cx="1.3" cy="1.3" r="1.15" fill="#b4b7c6"/><circle cx="4.7" cy="1.3" r="1.15" fill="#b4b7c6"/><circle cx="8.1" cy="1.3" r="1.15" fill="#b4b7c6"/></svg><svg class="i" style="left:302.80px;top:6.20px" width="11.4" height="11.4" viewBox="0 0 12 12"><circle cx="6" cy="6" r="6" fill="#9a9db0"/><circle cx="6" cy="3.2" r="1.05" fill="#17181d"/><path d="M4.7 5.1h2v3.3h.7v1H4.6v-1h.7V6.1h-.6z" fill="#17181d"/></svg><div class="h" style="left:-10.35px;top:35.50px;background:#4ab2d6;border-radius:50%;"></div><div class="t" style="left:12.2px;top:37.00px;font-size:11.9px;font-weight:700;color:#b8bbca">Positive Conditioning</div><div class="h" style="left:-10.35px;top:62.50px;background:#4ab2d6;border-radius:50%;"></div><div class="t" style="left:12.2px;top:64.00px;font-size:11.9px;font-weight:700;color:#b8bbca">Negative Conditioning</div><div class="h" style="left:-10.35px;top:89.50px;background:#e2592a;border-radius:3.5px;"></div><div class="t" style="left:12.2px;top:91.00px;font-size:11.9px;font-weight:700;color:#d18f8a">UNet</div><div class="h" style="left:-10.35px;top:116.50px;background:#c94f90;border-radius:50%;"></div><div class="t" style="left:12.2px;top:118.00px;font-size:11.9px;font-weight:700;color:#b8bbca">Noise</div><div class="h" style="left:-10.35px;top:143.50px;background:#c94f90;border-radius:50%;"></div><div class="t" style="left:12.2px;top:145.00px;font-size:11.9px;font-weight:700;color:#b8bbca">Latents</div><div class="h" style="left:-10.35px;top:170.50px;border:4px solid #4a9f9b;background:#1b1c22;border-radius:50%;"></div><div class="t" style="left:12.2px;top:172.00px;font-size:11.9px;font-weight:700;color:#b8bbca">Control</div><div class="h" style="left:-10.35px;top:197.50px;border:4px solid #4a9f9b;background:#1b1c22;border-radius:50%;"></div><div class="t" style="left:12.2px;top:199.00px;font-size:11.9px;font-weight:700;color:#b8bbca;letter-spacing:0.15px">IP-Adapter</div><div class="h" style="left:-10.35px;top:224.50px;border:4px solid #4a9f9b;background:#1b1c22;border-radius:50%;"></div><div class="t" style="left:12.2px;top:226.00px;font-size:11.9px;font-weight:700;color:#b8bbca;letter-spacing:0.3px">T2I-Adapter</div><div class="h" style="left:-10.35px;top:251.50px;background:#7b8198;border-radius:50%;"></div><div class="t" style="left:12.2px;top:253.00px;font-size:11.9px;font-weight:700;color:#b8bbca">Denoise Mask</div><div class="h" style="left:314.35px;top:35.50px;background:#c94f90;border-radius:50%;"></div><div class="t" style="right:12.2px;top:37.00px;font-size:11.9px;font-weight:700;color:#b8bbca">Latents</div><div class="h" style="left:314.35px;top:62.50px;background:#e2592a;border-radius:50%;"></div><div class="t" style="right:12.2px;top:64.00px;font-size:11.9px;font-weight:700;color:#b8bbca">Width</div><div class="h" style="left:314.35px;top:89.50px;background:#e2592a;border-radius:50%;"></div><div class="t" style="right:12.2px;top:91.00px;font-size:11.9px;font-weight:700;color:#b8bbca">Height</div><div class="t" style="left:12.2px;top:276.00px;font-size:11.9px;font-weight:700;color:#b8bbca">Steps</div><div class="h" style="left:-10.35px;top:291.00px;background:#e2592a;border-radius:50%;"></div><div class="f" style="left:12px;top:295.20px;width:296.3px;height:28.5px"></div><div class="t" style="left:22.2px;top:302.00px;font-size:12.4px;font-weight:400;color:#d2d5e1;letter-spacing:-0.8px">10</div><svg class="i" style="left:294.7px;top:300.50px" width="6" height="3.6" viewBox="0 0 6 3.6"><path d="M0.6 3.1 L3 0.7 L5.4 3.1" fill="none" stroke="#b4b7c6" stroke-width="1.2" stroke-linecap="round" stroke-linejoin="round"/></svg><svg class="i" style="left:294.7px;top:313.70px" width="6" height="3.6" viewBox="0 0 6 3.6"><path d="M0.6 0.5 L3 2.9 L5.4 0.5" fill="none" stroke="#b4b7c6" stroke-width="1.2" stroke-linecap="round" stroke-linejoin="round"/></svg><div class="t" style="left:12.2px;top:328.00px;font-size:11.9px;font-weight:700;color:#b8bbca;letter-spacing:-0.15px">CFG Scale</div><div class="h" style="left:-10.35px;top:342.62px;border:4px solid #d97c36;background:#1b1c22;border-radius:50%;"></div><div class="f" style="left:12px;top:346.82px;width:296.3px;height:28.5px"></div><div class="t" style="left:22.2px;top:353.00px;font-size:12.4px;font-weight:400;color:#d2d5e1;letter-spacing:-0.8px">7.5</div><svg class="i" style="left:294.7px;top:352.12px" width="6" height="3.6" viewBox="0 0 6 3.6"><path d="M0.6 3.1 L3 0.7 L5.4 3.1" fill="none" stroke="#b4b7c6" stroke-width="1.2" stroke-linecap="round" stroke-linejoin="round"/></svg><svg class="i" style="left:294.7px;top:365.32px" width="6" height="3.6" viewBox="0 0 6 3.6"><path d="M0.6 0.5 L3 2.9 L5.4 0.5" fill="none" stroke="#b4b7c6" stroke-width="1.2" stroke-linecap="round" stroke-linejoin="round"/></svg><div class="t" style="left:12.2px;top:379.00px;font-size:11.9px;font-weight:700;color:#b8bbca">Denoising Start</div><div class="h" style="left:-10.35px;top:394.24px;background:#d97c36;border-radius:50%;"></div><div class="f" style="left:12px;top:398.44px;width:296.3px;height:28.5px"></div><div class="t" style="left:22.2px;top:405.00px;font-size:12.4px;font-weight:400;color:#d2d5e1">0</div><svg class="i" style="left:294.7px;top:403.74px" width="6" height="3.6" viewBox="0 0 6 3.6"><path d="M0.6 3.1 L3 0.7 L5.4 3.1" fill="none" stroke="#b4b7c6" stroke-width="1.2" stroke-linecap="round" stroke-linejoin="round"/></svg><svg class="i" style="left:294.7px;top:416.94px" width="6" height="3.6" viewBox="0 0 6 3.6"><path d="M0.6 0.5 L3 2.9 L5.4 0.5" fill="none" stroke="#6f7281" stroke-width="1.2" stroke-linecap="round" stroke-linejoin="round"/></svg><div class="t" style="left:12.2px;top:431.00px;font-size:11.9px;font-weight:700;color:#b8bbca;letter-spacing:-0.15px">Denoising End</div><div class="h" style="left:-10.35px;top:445.86px;background:#d97c36;border-radius:50%;"></div><div class="f" style="left:12px;top:450.06px;width:296.3px;height:28.5px"></div><div class="t" style="left:22.2px;top:457.00px;font-size:12.4px;font-weight:400;color:#d2d5e1">1</div><svg class="i" style="left:294.7px;top:455.36px" width="6" height="3.6" viewBox="0 0 6 3.6"><path d="M0.6 3.1 L3 0.7 L5.4 3.1" fill="none" stroke="#6f7281" stroke-width="1.2" stroke-linecap="round" stroke-linejoin="round"/></svg><svg class="i" style="left:294.7px;top:468.56px" width="6" height="3.6" viewBox="0 0 6 3.6"><path d="M0.6 0.5 L3 2.9 L5.4 0.5" fill="none" stroke="#b4b7c6" stroke-width="1.2" stroke-linecap="round" stroke-linejoin="round"/></svg><div class="t" style="left:12.2px;top:482.00px;font-size:11.9px;font-weight:700;color:#b8bbca">Scheduler</div><div class="h" style="left:-10.35px;top:497.48px;background:#7b8198;border-radius:50%;"></div><div class="f" style="left:12px;top:501.68px;width:296.3px;height:28.5px"></div><div class="t" style="left:24.6px;top:509.00px;font-size:12.4px;font-weight:400;color:#d2d5e1;letter-spacing:-0.2px">Euler</div><svg class="i" style="left:290.8px;top:513.38px" width="8" height="5" viewBox="0 0 8 5"><path d="M0.7 0.7 L4 4 L7.3 0.7" fill="none" stroke="#d2d5e1" stroke-width="1.5" stroke-linecap="round" stroke-linejoin="round"/></svg><div class="t" style="left:12.2px;top:534.00px;font-size:11.9px;font-weight:700;color:#b8bbca;letter-spacing:-0.08px">CFG Rescale Multiplier</div><div class="h" style="left:-10.35px;top:549.10px;background:#d97c36;border-radius:50%;"></div><div class="f" style="left:12px;top:553.30px;width:296.3px;height:28.5px"></div><div class="t" style="left:22.2px;top:560.00px;font-size:12.4px;font-weight:400;color:#d2d5e1">0</div><svg class="i" style="left:294.7px;top:558.60px" width="6" height="3.6" viewBox="0 0 6 3.6"><path d="M0.6 3.1 L3 0.7 L5.4 3.1" fill="none" stroke="#b4b7c6" stroke-width="1.2" stroke-linecap="round" stroke-linejoin="round"/></svg><svg class="i" style="left:294.7px;top:571.80px" width="6" height="3.6" viewBox="0 0 6 3.6"><path d="M0.6 0.5 L3 2.9 L5.4 0.5" fill="none" stroke="#6f7281" stroke-width="1.2" stroke-linecap="round" stroke-linejoin="round"/></svg><div class="ft" style="top:588.6px;height:23.3px"><div class="cb" style="top:6.0px"><svg width="12.4" height="12.2" viewBox="0 0 12.4 12.2"><path d="M-0.3 7.4 L4.2 10.9 L12.7 1.2" fill="none" stroke="#e4f0fb" stroke-width="1.75" stroke-linecap="butt" stroke-linejoin="miter"/></svg></div></div><div class="t" style="left:6.2px;top:594.00px;font-size:11.9px;font-weight:700;color:#b8bbca">Use Cache</div></div>
</div>
</body></html>
